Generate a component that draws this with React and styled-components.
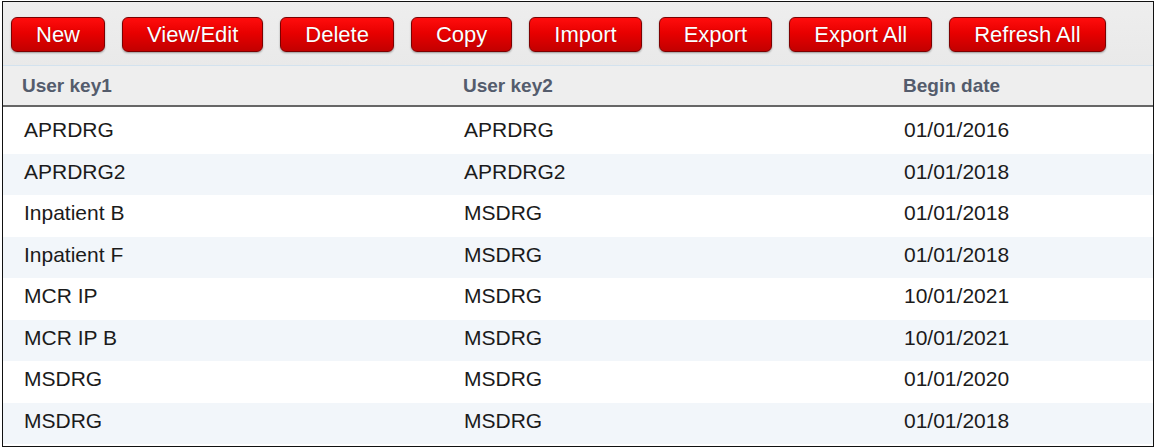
import React from 'react';
import styled, {createGlobalStyle} from 'styled-components';

const GlobalStyle = createGlobalStyle`
  body {
    margin: 0;
    background: #ffffff;
    font-family: "Liberation Sans", Arial, sans-serif;
  }
`;

const actions = ['New', 'View/Edit', 'Delete', 'Copy', 'Import', 'Export', 'Export All', 'Refresh All'];

const rows = [
  {key1: 'APRDRG', key2: 'APRDRG', begin: '01/01/2016'},
  {key1: 'APRDRG2', key2: 'APRDRG2', begin: '01/01/2018'},
  {key1: 'Inpatient B', key2: 'MSDRG', begin: '01/01/2018'},
  {key1: 'Inpatient F', key2: 'MSDRG', begin: '01/01/2018'},
  {key1: 'MCR IP', key2: 'MSDRG', begin: '10/01/2021'},
  {key1: 'MCR IP B', key2: 'MSDRG', begin: '10/01/2021'},
  {key1: 'MSDRG', key2: 'MSDRG', begin: '01/01/2020'},
  {key1: 'MSDRG', key2: 'MSDRG', begin: '01/01/2018'},
];

const App = () => {
  return (
    <>
      <GlobalStyle />
      <Frame>
        <Toolbar>
          {actions.map((label) => (
            <RedButton key={label}>{label}</RedButton>
          ))}
        </Toolbar>
        <HeaderRow>
          <HeaderCell>User key1</HeaderCell>
          <HeaderCell>User key2</HeaderCell>
          <HeaderCell>Begin date</HeaderCell>
        </HeaderRow>
        <Body>
          {rows.map((item, index) => (
            <Row key={index} striped={index % 2 === 1}>
              <Cell>{item.key1}</Cell>
              <Cell>{item.key2}</Cell>
              <Cell>{item.begin}</Cell>
            </Row>
          ))}
        </Body>
      </Frame>
    </>
  );
};

const Frame = styled.div`
  box-sizing: border-box;
  margin: 1px 0 0 2px;
  width: 1152px;
  height: 446px;
  border: 1px solid #111;
  background: #fff;
  overflow: hidden;
`;

const Toolbar = styled.div`
  display: flex;
  align-items: flex-start;
  gap: 17px;
  height: 64px;
  box-sizing: border-box;
  padding: 15px 0 0 8px;
  background: linear-gradient(#eeeeee, #e9e9e9);
  border-bottom: 1px solid #d3e2ee;
`;

const RedButton = styled.button`
  height: 35px;
  padding: 0 24px;
  border: 1px solid #7c0000;
  border-radius: 6px;
  background: linear-gradient(#ff0d0d 0%, #e80000 45%, #c20000 100%);
  box-shadow: 0 1px 2px rgba(0, 0, 0, 0.35);
  color: #ffffff;
  font-family: "Liberation Sans", Arial, sans-serif;
  font-size: 22px;
  line-height: 33px;
  text-shadow: 0 0 1px rgba(90, 0, 0, 0.6);
  cursor: pointer;
`;

const HeaderRow = styled.div`
  display: grid;
  grid-template-columns: 441px 440px 1fr;
  height: 39px;
  align-items: center;
  padding-left: 19px;
  background: #eeeeee;
  border-bottom: 2px solid #666666;
`;

const HeaderCell = styled.div`
  font-size: 19px;
  font-weight: bold;
  color: #545c6c;
`;

const Body = styled.div`
  padding-top: 5px;
`;

const Row = styled.div`
  display: grid;
  grid-template-columns: 440px 440px 1fr;
  height: 41.5px;
  box-sizing: border-box;
  align-items: center;
  padding: 0 0 5px 21px;
  background: ${(p) => (p.striped ? '#f2f6fa' : '#ffffff')};
`;

const Cell = styled.div`
  font-size: 21px;
  color: #1b1b1b;
`;

export default App;
